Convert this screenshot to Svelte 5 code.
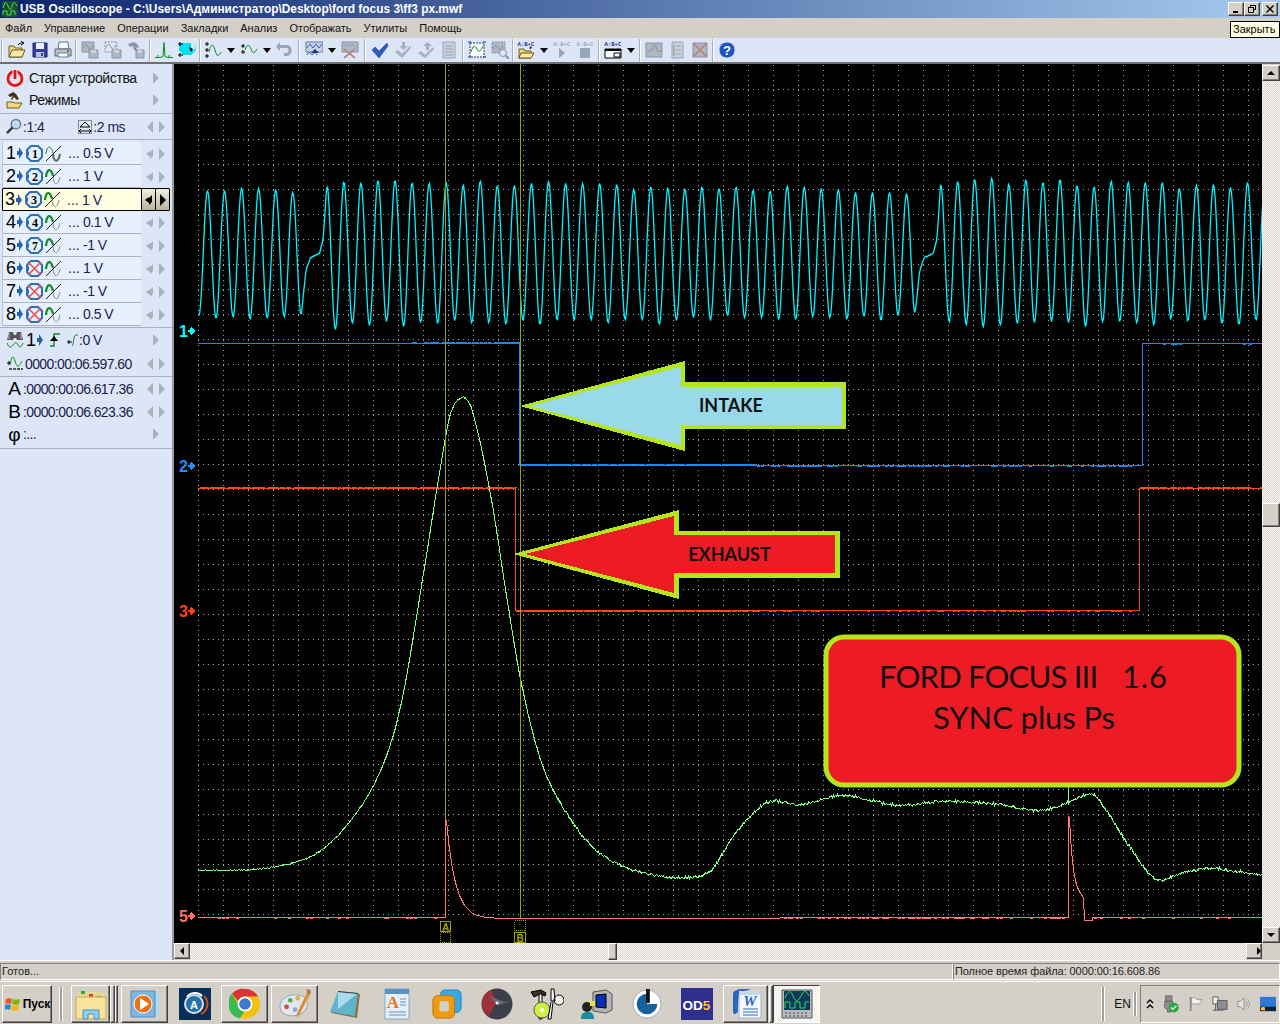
<script>
  // toolbar pictures, all on an 18x18 box
  const grey = 'fill="#aeb7c6" stroke="#8b95a6"';
  const ICONS = {
    open: '<path d="M1 5h5l1 2h7v9H1z" fill="#f6d67a" stroke="#6b5a20"/><path d="M1 16l3-7h13l-3 7z" fill="#fbe9a6" stroke="#6b5a20"/><path d="M10 4c1-2 3-2 5-2M13 0l3 2-3 2" fill="none" stroke="#000"/>',
    save: '<path d="M2 2h14v14H2z" fill="#2f3f9f" stroke="#1a2468"/><path d="M5 2h8v6H5z" fill="#e8ecf6"/><path d="M5 11h8v5H5z" fill="#b9c2d8"/><path d="M10 12h2v3h-2z" fill="#2f3f9f"/>',
    print: '<path d="M5 1h9l1 7H4z" fill="#f4f6fa" stroke="#6d7585"/><path d="M1 8h16v7H1z" fill="#bcc4d0" stroke="#5d6575"/><path d="M4 12h10v4H4z" fill="#fff" stroke="#6d7585"/><path d="M13 9h2v2h-2z" fill="#19a03c"/>',
    gcopy: '<path d="M1 1h12v10H1z" ' + grey + '/><path d="M2 7c2-5 3-5 5-1s3 2 5-2" fill="none" stroke="#7f9a7f"/><path d="M8 9h9v8H8z" ' + grey + '/><path d="M10 9h5v3h-5z" fill="#ccd3de"/>',
    gcopy2: '<path d="M1 1h12v10H1z" fill="none" stroke="#8b95a6" stroke-dasharray="2 1"/><path d="M2 7c2-5 3-5 5-1s3 2 5-2" fill="none" stroke="#7f9a7f"/><path d="M8 9h9v8H8z" ' + grey + '/><path d="M10 9h5v3h-5z" fill="#ccd3de"/>',
    ghammer: '<path d="M1 3l6-2 3 2 2 3-2 1-3-2-4 1z" fill="#8b95a6"/><path d="M7 5l3 3-1 2-3-3z" fill="#7a8494"/><path d="M9 9h8v8H9z" ' + grey + '/><path d="M11 9h4v3h-4z" fill="#ccd3de"/>',
    peak: '<path d="M0 16.500h5l3-1 1-14 1 14 3 1h5" fill="none" stroke="#0b8a1e"/><path d="M3 14v3M14 14v3" stroke="#0b8a1e"/>',
    cyan: '<path d="M1 2h12v6l4 1 1-7v7l-5 5H5L1 9z" fill="#00e0f0"/><path d="M0 3h5M0 14h5M2 1v4M2 12v4" stroke="#000"/><path d="M11 6l4 2-2 3z" fill="#000"/>',
    curs: '<path d="M1 3h4M3 1v4M1 9h4M3 7v4M1 15h4M3 13v4" stroke="#000"/><path d="M5 11c2-9 4-9 6-2s3 7 6 2" fill="none" stroke="#0b8a1e"/>',
    curs2: '<path d="M1 5h4M3 3v4M1 11h4M3 9v4" stroke="#000"/><path d="M5 9c2-6 4-6 6-1s3 5 6 0" fill="none" stroke="#0b8a1e"/>',
    undo: '<path d="M4 4h7c6 0 6 11 0 11H8v-3h3c2 0 2-5 0-5H4v3L0 5.500 4 1z" fill="#98a4b8"/>',
    split: '<path d="M1 1h17v10H1z" fill="#c7d2e6" stroke="#6a7a95"/><path d="M2 7l3-4 3 4 3-4 3 4 3-4" fill="none" stroke="#2a62d8"/><path d="M2 14l2-3 3 3 3-3 2 3" fill="none" stroke="#2a62d8"/><path d="M10 8l4 4h-8z" fill="#26337a"/>',
    gsplit: '<path d="M1 1h16v10H1z" ' + grey + '/><path d="M3 6l3-3 3 3 3-3 3 3" fill="none" stroke="#8ea0b8"/><path d="M3 8l11 9M14 8L3 17" stroke="#b98a84" stroke-width="2"/>',
    check: '<path d="M1 9l3-3 4 4 8-8 1 3-9 12z" fill="#2a5fc0" stroke="#1c3f8a" stroke-width=".5"/>',
    gcheck: '<path d="M1 11l3-2 4 4 8-8 1 2-9 10z" fill="#a6b0c0"/><path d="M8 1h3v4h3l-4.500 4L5 5h3z" fill="#a6b0c0"/>',
    gcheck2: '<path d="M1 12l3-2 4 4 8-8 1 2-9 9z" fill="#a6b0c0"/><path d="M9 9V5H6l4.500-4L15 5h-3v4z" fill="#a6b0c0"/>',
    gdoc: '<path d="M3 1h12v16H3z" fill="#c9d0dc" stroke="#9aa4b4"/><path d="M5 5h8M5 8h8M5 11h8M5 14h8" stroke="#9aa4b4"/>',
    gframe: '<path d="M2 2h14v14H2z" fill="#fff" stroke="#1a2f8a" stroke-dasharray="2 1"/><path d="M3 11c2-7 4-7 6-3s3 3 6-3" fill="none" stroke="#0b8a1e"/><path d="M0 1h3M0 16h3M15 1h3M15 16h3" stroke="#1a2f8a"/>',
    gzoom: '<path d="M1 1h13v11H1z" ' + grey + ' stroke-dasharray="2 1"/><path d="M2 8c2-4 3-4 5-1s3 1 5-2" fill="none" stroke="#7f9a7f"/><circle cx="12" cy="12" r="3.500" fill="#dde6f6" stroke="#8b95a6"/><path d="M14 14l4 4" stroke="#8b95a6" stroke-width="2"/>',
    abcfolder: '<path d="M2 8h5l1 2h6v7H2z" fill="#f6d67a" stroke="#6b5a20"/><path d="M2 17l2-5h13l-3 5z" fill="#fbe9a6" stroke="#6b5a20"/><path d="M12 7l3-2-1 3z" fill="#000"/><text x="0.500" y="5" class="mini" fill="#1a2f8a">A:B+C</text>',
    abcplay: '<text x="0.500" y="5" class="mini" fill="#9aa4b8">A:B+C</text><path d="M6 7l6 5-6 5z" fill="#98a4b8"/>',
    abcstop: '<text x="0.500" y="5" class="mini" fill="#9aa4b8">A:B+C</text><path d="M4 7h10v10H4z" fill="#98a4b8"/>',
    abcwin: '<text x="0.500" y="5" class="mini" fill="#1a2f8a">A:B+C</text><path d="M1 8h16v9H1z" fill="#fff" stroke="#000"/><path d="M1 8h16v2H1z" fill="#000"/><path d="M10 12h6v4h-6z" fill="#fff" stroke="#000"/>',
    gscope: '<path d="M1 2h16v14H1z" ' + grey + '/><path d="M2 10h4c2 0 2-6 4-6s1 8 3 6h4" fill="none" stroke="#7f9a7f"/>',
    gdoc2: '<path d="M4 1h11v16H4z" fill="#c9d0dc" stroke="#9aa4b4"/><path d="M6 4v11" stroke="#7f9a7f"/><path d="M8 5h5M8 9h5M8 13h5" stroke="#9aa4b4"/>',
    gx: '<path d="M2 2h14v14H2z" ' + grey + '/><path d="M2 2l14 14M16 2L2 16" stroke="#b98a84" stroke-width="2"/>',
    help: '<circle cx="9" cy="9" r="8" fill="#2353c0" stroke="#bcd0f0"/><text x="9" y="13.500" class="q">?</text>'
  };

  const TOOLS = [
    's1','open','save','print','s4','gcopy','gcopy2','ghammer','s5','peak','cyan','s3',
    'curs','dd','curs2','dd','undo','s6','split','dd','gsplit','s7',
    'check','gcheck','gcheck2','gdoc','s5','gframe','gzoom','s3',
    'abcfolder','dd','abcplay','abcstop','s5','abcwin','dd','s5','gscope','gdoc2','gx','s4','help'
  ];
  const MENU = ['Файл','Управление','Операции','Закладки','Анализ','Отображать','Утилиты','Помощь'];
  const CHANNELS = [
    { n: 1, src: '1', v: '0.5 V', dim: true },
    { n: 2, src: '2', v: '1 V' },
    { n: 3, src: '3', v: '1 V', sel: true },
    { n: 4, src: '4', v: '0.1 V' },
    { n: 5, src: '7', v: '-1 V' },
    { n: 6, src: '', v: '1 V' },
    { n: 7, src: '', v: '-1 V' },
    { n: 8, src: '', v: '0.5 V' }
  ];

  // scope traces, in page pixels
  const L = 198, R = 1262;
  const rnd = i => Math.abs(Math.sin(i * 12.9898 + 4.1) * 43758.5453) % 1;
  const pts = list => list.map(p => p[0] + ',' + p[1]).join(' ');

  let gridV = '';
  for (let x = L; x < R; x += 25) gridV += `M${x + 0.5} 65V915`;
  let gridH = '';
  for (let y = 89; y <= 914; y += 25) gridH += `M${L} ${y + 0.5}H${R}`;

  const P = 17.05, X0 = 207;
  const top = i => {
    const d = ((i - 7) % 36 + 36) % 36;
    return 180 + 11 * d / 36 + 7 * (rnd(i) - 0.5);
  };
  const bot = i => {
    const d = ((i - 7) % 36 + 36) % 36;
    return 325 - 9 * d / 36 + 8 * (rnd(i + 99) - 0.5);
  };
  const GAP_T = [0, 0.18, 0.36, 0.71, 0.86, 1];
  function cyanY(x) {
    const k = (x - X0) / P;
    for (const g of [6, 42]) {
      if (k >= g - 0.5 && k < g + 1) {
        const t = (k - g + 0.5) / 1.5;
        const ys = [bot(g - 1), 270, 257, 253, 238, top(g + 1)];
        let j = 0;
        while (t > GAP_T[j + 1]) j++;
        return ys[j] + (ys[j + 1] - ys[j]) * (t - GAP_T[j]) / (GAP_T[j + 1] - GAP_T[j]);
      }
    }
    const s = Math.floor(2 * k);
    const f = 2 * k - s;
    const val = n => (n % 2 === 0 ? top(n / 2) : bot((n - 1) / 2));
    const e = (1 - Math.cos(Math.PI * f)) / 2;
    return val(s) + (val(s + 1) - val(s)) * e;
  }
  const cyan = [];
  for (let x = L; x <= R; x++) cyan.push([x + 0.5, Math.round(cyanY(x)) + 0.5]);

  const GREEN = [[198,870],[250,869],[290,863],[320,850],[350,820],[380,770],[400,705],[420,590],[440,465],[450,413],[462,397],[472,412],[490,495],[505,590],[520,680],[540,760],[560,803],[590,845],[620,865],[650,874],[690,877],[710,870],[730,840],[750,815],[770,801],[800,804],[840,795],[870,800],[900,805],[940,801],[990,803],[1040,810],[1068,802],[1092,794],[1110,817],[1128,845],[1150,875],[1160,880],[1173,875],[1207,868],[1235,871],[1262,875]];
  function greenY(x) {
    let i = 0;
    while (i < GREEN.length - 2 && x > GREEN[i + 1][0]) i++;
    const p1 = GREEN[i], p2 = GREEN[i + 1];
    const p0 = GREEN[i - 1] || p1, p3 = GREEN[i + 2] || p2;
    const t = (x - p1[0]) / (p2[0] - p1[0]);
    const m1 = (p2[1] - p0[1]) / (p2[0] - p0[0]) * (p2[0] - p1[0]);
    const m2 = (p3[1] - p1[1]) / (p3[0] - p1[0]) * (p2[0] - p1[0]);
    const t2 = t * t, t3 = t2 * t;
    return (2*t3 - 3*t2 + 1) * p1[1] + (t3 - 2*t2 + t) * m1 + (-2*t3 + 3*t2) * p2[1] + (t3 - t2) * m2;
  }
  const green = [];
  for (let x = L; x <= R; x += 0.5) {
    const amp = x > 540 ? 2.6 : 1.2;
    green.push([Math.round(x) + 0.5, Math.round(greenY(x) + (rnd(Math.round(x)) - 0.5) * amp) + 0.5]);
  }

  const pink = [[L, 917.5], [445.5, 917.5], [445.5, 820.5]];
  for (let x = 446; x <= 500; x++) pink.push([x + 0.5, Math.round(918 - 98 * Math.exp(-(x - 446) / 9)) + 0.5]);
  pink.push([1068.5, 917.5], [1068.5, 816.5]);
  for (let x = 1069; x <= 1083; x++) pink.push([x + 0.5, Math.round(888 + 10 * ((x - 1069) / 14) - 70 * Math.exp(-(x - 1069) / 3.5)) + 0.5]);
  pink.push([1084.5, 920.5], [1092.5, 920.5], [1092.5, 917.5], [R, 917.5]);

  const blue = [[L, 343.5], [519.5, 343.5], [519.5, 465.5], [1142.5, 465.5], [1142.5, 343.5], [R, 343.5]];
  const orange = [[L, 488.5], [515.5, 488.5], [515.5, 610.5], [1139.5, 610.5], [1139.5, 488.5], [R, 488.5]];

  // the samples jitter by a pixel, which makes the flat parts look thicker
  function speckle(x1, x2, y, density) {
    let d = '';
    for (let x = x1; x < x2; x += 2) {
      if (rnd(x * 1.7 + y) < density) d += `M${x} ${y + 0.5}h3`;
    }
    return d;
  }
  const blueSpeck = speckle(412, 519, 342, 0.7) + speckle(520, 755, 464, 0.9) + speckle(755, 1142, 466, 0.35) + speckle(1143, 1262, 344, 0.15);
  const orangeSpeck = speckle(198, 515, 487, 0.8) + speckle(516, 755, 611, 0.85) + speckle(755, 1139, 611, 0.3) + speckle(1140, 1262, 487, 0.7);
  const pinkSpeck = speckle(198, 445, 918, 0.2) + speckle(500, 1068, 918, 0.35) + speckle(1092, 1262, 918, 0.15);

  const LABELS = [
    { t: '1', y: 337, c: '#00ffff' },
    { t: '2', y: 472, c: '#1e90ff' },
    { t: '3', y: 617, c: '#ff4500' },
    { t: '5', y: 922, c: '#ff7070' }
  ];
</script>

<div class="app">
  <header class="title">
    <svg class="appicon" viewBox="0 0 16 16"><rect width="16" height="16" fill="#1d4a30"/><path d="M1 7c2-7 3-7 5-2s3 5 4 0 3-4 5 0" fill="none" stroke="#30f050"/><path d="M1 14V10h4v4h4V10h4v4" fill="none" stroke="#30f050"/></svg>
    <span class="title-text">USB Oscilloscope - C:\Users\Администратор\Desktop\ford focus 3\ff3 px.mwf</span>
    <div class="winbtns">
      <button class="bev wb"><svg viewBox="0 0 10 10"><path d="M2 7h5v2H2z"/></svg></button>
      <button class="bev wb"><svg viewBox="0 0 10 10"><path d="M3.500 3V1.500h5v4H7M1.500 3.500h5v5h-5z" fill="none" stroke="#000"/><path d="M1 3h6v1H1zM3 1h6v1H3z"/></svg></button>
      <button class="bev wb wide"><svg viewBox="0 0 10 10"><path d="M1.500 1.500l7 7M8.500 1.500l-7 7" stroke="#000" stroke-width="1.400"/></svg></button>
    </div>
  </header>

  <nav class="menu">
    {#each MENU as m}<span>{m}</span>{/each}
  </nav>

  <div class="toolbar">
    {#each TOOLS as t}
      {#if t === 'dd'}
        <span class="dd"><i></i></span>
      {:else if t[0] === 's' && t.length === 2}
        <span class="sep {t}"></span>
      {:else}
        <span class="tool"><svg viewBox="0 0 18 18" width="18" height="18">{@html ICONS[t]}</svg></span>
      {/if}
    {/each}
  </div>

  <div class="work">
    <aside class="side">
      <div class="srow big first">
        <svg class="ic" viewBox="0 0 18 18"><circle cx="9" cy="9.500" r="7" fill="none" stroke="#e81010" stroke-width="2.800"/><path d="M9 0v9" stroke="#dde6f6" stroke-width="5"/><path d="M9 1v9" stroke="#e81010" stroke-width="2.800"/></svg>
        <span class="label">Старт устройства</span>
        <i class="tri r"></i>
      </div>
      <div class="srow big second rule">
        <svg class="ic" viewBox="0 0 18 18"><path d="M1 11h6l1 1h8l-3 5H1z" fill="#f6d67a" stroke="#6b5a20"/><path d="M2 4l5-3 3 2 3 5-2 1-3-3-2 3-1-1 2-3-3 1z" fill="#3f3018"/></svg>
        <span class="label">Режимы</span>
        <i class="tri r"></i>
      </div>
      <div class="srow zoomrow rule">
        <svg class="ic small" viewBox="0 0 18 18"><circle cx="10.500" cy="6.500" r="5" fill="#bcd8f4" stroke="#6e7a8a" stroke-width="1.500"/><path d="M7 10l-6 6" stroke="#3a3a3a" stroke-width="2.500"/></svg>
        <span class="val">:1:4</span>
        <svg class="ic tb" viewBox="0 0 14 14"><rect x=".5" y=".5" width="13" height="13" fill="none" stroke="#333" stroke-dasharray="1 1"/><path d="M7 2l5 5H2z" fill="none" stroke="#000"/><path d="M1 11h12M1 11l2-2M1 11l2 2M13 11l-2-2M13 11l-2 2" fill="none" stroke="#000"/></svg>
        <span class="val">:2 ms</span>
        <span class="arrows"><i class="tri l"></i><i class="tri r"></i></span>
      </div>

      <div class="channels">
        {#each CHANNELS as c}
          <div class="ch" class:sel={c.sel}>
            <div class="ch-main">
              <span class="num">{c.n}</span>
              <svg class="bluearrow" viewBox="0 0 6 12"><path d="M0 4h2V0l4 6-4 6V8H0z" fill="#2a62b0"/></svg>
              <svg class="octa" viewBox="0 0 17 17">
                <path d="M5 1h7l4 4v7l-4 4H5l-4-4V5z" fill="#e6f0ff" stroke="#2f6fb4" stroke-width="2"/>
                <path d="M0 8.500l3-2.500v5z" fill="#2f6fb4"/>
                {#if c.src}
                  <text x="9" y="13" class="octanum">{c.src}</text>
                {:else}
                  <path d="M2 2l13 13M15 2L2 15" stroke="#f05050" stroke-width="1.600"/>
                {/if}
              </svg>
              <svg class="wave" viewBox="0 0 17 17">
                <path d="M1 9C2 0 6 0 8 8" fill="none" stroke="#0b8a1e" stroke-width={c.dim ? 1 : 2.2}/>
                <path d="M8 9c1 9 5 9 7 0" fill="none" stroke={c.dim ? '#666' : '#888'} stroke-width={c.dim ? 2.2 : 1}/>
                <path d="M1 16L16 1" stroke="#222"/>
              </svg>
              <span class="dots">...</span>
              <span class="val">{c.v}</span>
            </div>
            <div class="ch-arrows">
              {#if c.sel}
                <span class="selbtn"><svg viewBox="0 0 8 12"><path d="M1 6h3v5l3-3V1L4 4V6z" fill="#000"/><path d="M0 6l4-3v6z" fill="#000"/></svg></span>
                <span class="selbtn"><i class="tri r black"></i></span>
              {:else}
                <svg class="back" viewBox="0 0 8 12"><path d="M1 6h3v5l3-3V1L4 4V6z" fill="#a9b1bd"/><path d="M0 6l4-3v6z" fill="#a9b1bd"/></svg>
                <i class="tri r"></i>
              {/if}
            </div>
          </div>
        {/each}
      </div>

      <div class="srow trig rule-top">
        <svg class="ic" viewBox="0 0 18 18"><path d="M3 1h4l1 3h2l1-3h4l2 8H11L10 7H8L7 9H1z" fill="#555"/><path d="M3 2v6M15 2v6" stroke="#bbb"/><path d="M1 12c2 5 4 5 6 2s4-3 5 0 3 3 5-2" fill="none" stroke="#0b8a1e"/></svg>
        <span class="num">1</span>
        <svg class="bluearrow" viewBox="0 0 6 12"><path d="M0 4h2V0l4 6-4 6V8H0z" fill="#2a62b0"/></svg>
        <svg class="ic edge" viewBox="0 0 12 14"><path d="M1 13h4V1h6" fill="none" stroke="#0b8a1e" stroke-width="1.400"/><path d="M5 3l4 5H1z" fill="#000"/></svg>
        <svg class="ic lvl" viewBox="0 0 12 14"><path d="M0 9h5M2 7v4" stroke="#000"/><path d="M5 13c2 0 1-11 4-11h2" fill="none" stroke="#0b8a1e"/></svg>
        <span class="val">:0 V</span>
        <i class="tri r push"></i>
      </div>
      <div class="srow trig2">
        <svg class="ic" viewBox="0 0 18 18"><path d="M1 8h4M3 6v4" stroke="#000"/><path d="M3 14h14" stroke="#555" stroke-width="2" stroke-dasharray="3 1"/><path d="M4 10c2-10 3-10 5-4s3 8 7 0" fill="none" stroke="#0b8a1e"/></svg>
        <span class="val time">0000:00:06.597.60</span>
        <span class="arrows"><i class="tri l"></i><i class="tri r"></i></span>
      </div>
      <div class="srow cur first-cur rule-top">
        <span class="curname">A</span>
        <span class="val time">:0000:00:06.617.36</span>
        <span class="arrows"><i class="tri l"></i><i class="tri r"></i></span>
      </div>
      <div class="srow cur">
        <span class="curname">B</span>
        <span class="val time">:0000:00:06.623.36</span>
        <span class="arrows"><i class="tri l"></i><i class="tri r"></i></span>
      </div>
      <div class="srow cur phi rule">
        <span class="curname">φ</span>
        <span class="val time">:...</span>
        <i class="tri r push"></i>
      </div>
    </aside>

    <div class="center">
      <div class="scope-row">
        <svg class="scope" viewBox="174 64 1088 879" width="1088" height="879">
          <rect x="174" y="64" width="1088" height="879" fill="#000"/>
          <g shape-rendering="crispEdges" fill="none" stroke="#a0a0a0" stroke-dasharray="1 4">
            <path d={gridV}/>
            <path d={gridH}/>
          </g>

          <polyline points={pts(cyan)} fill="none" stroke="#00f4ff" stroke-width="1.300"/>
          <g fill="none" shape-rendering="crispEdges">
            <polyline points={pts(blue)} stroke="#1e88f0"/>
            <path d={blueSpeck} stroke="#1e88f0"/>
            <polyline points={pts(orange)} stroke="#ff4a10"/>
            <path d={orangeSpeck} stroke="#ff4a10"/>
            <polyline points={pts(green)} stroke="#80ff80"/>
            <path d="M1068.500 787V802" stroke="#80ff80"/>
            <path d="M445.500 64V918M520.500 64V918" stroke="#a0a000"/>
            <polyline points={pts(pink)} stroke="#ff7878"/>
            <path d={pinkSpeck} stroke="#ff7878"/>
          </g>

          {#each LABELS as l}
            <text x="179" y={l.y} class="chlabel" fill={l.c}>{l.t}</text>
            <path d="M188 {l.y - 7}h2v-2h1v-2l4 5-4 5v-2h-1v-2h-2z" fill={l.c} shape-rendering="crispEdges"/>
          {/each}

          <g fill="none" stroke="#a0a000" shape-rendering="crispEdges">
            <rect x="440.500" y="921.500" width="10" height="10"/>
            <rect x="440.500" y="932.500" width="10" height="10" stroke-dasharray="1 1"/>
            <rect x="514.500" y="920.500" width="11" height="10" stroke-dasharray="1 1"/>
            <rect x="514.500" y="932.500" width="11" height="10"/>
          </g>
          <text x="445.500" y="930.500" class="mark">A</text>
          <text x="520" y="941.500" class="mark">B</text>

          <g shape-rendering="crispEdges">
            <polygon points="520,406 685,361 685,382 846,382 846,429 685,429 685,451" fill="#b5e61d"/>
            <polygon points="530,406 681,367 681,387 842,387 842,425 681,425 681,445" fill="#99d9ea"/>
            <polygon points="513,554 679,510 679,531 840,531 840,578 679,578 679,599" fill="#b5e61d"/>
            <polygon points="525,554 674,516 674,535 835,535 835,573 674,573 674,593" fill="#ed1c24"/>
          </g>
          <text x="731" y="412" class="arrowtext">INTAKE</text>
          <text x="729.500" y="561" class="arrowtext">EXHAUST</text>

          <rect x="826" y="637" width="413" height="148" rx="18" fill="#ed1c24" stroke="#b5e61d" stroke-width="5"/>
          <text x="879" y="688" class="boxtext first-line">FORD FOCUS III<tspan x="1122" class="ver">1.6</tspan></text>
          <text x="1024" y="729" class="boxtext mid">SYNC plus Ps</text>
        </svg>

        <div class="vbar">
          <button class="bev sb"><i class="ar up"></i></button>
          <div class="track"><div class="bev vthumb"></div></div>
          <button class="bev sb"><i class="ar down"></i></button>
        </div>
      </div>
      <div class="hbar">
        <button class="bev sb"><i class="ar left"></i></button>
        <div class="track"><div class="bev hthumb"></div></div>
        <button class="bev sb"><i class="ar right"></i></button>
        <div class="corner"></div>
      </div>
    </div>
  </div>

  <div class="status">
    <div class="panel grow">Готов...</div>
    <div class="panel fixed">Полное время файла: 0000:00:16.608.86</div>
  </div>

  <footer class="taskbar">
    <button class="bev task start">
      <svg viewBox="0 0 16 16" width="16" height="16"><path d="M1 3c2-1 4-1 6 0l-1 5c-2-1-4-1-6 0z" fill="#e8562a"/><path d="M8 3c2 1 4 1 7 0l-1 5c-2 1-5 1-7 0z" fill="#7ab800"/><path d="M0 9c2-1 4-1 6 0l-1 5c-2-1-4-1-6 0z" fill="#1e88d8"/><path d="M7 9c2 1 4 1 7 0l-1 5c-2 1-5 1-7 0z" fill="#f4b400"/></svg>
      <b>Пуск</b>
    </button>
    <span class="handle h1"></span>

    <button class="bev task t39">
      <svg viewBox="0 0 32 32" width="32" height="32"><path d="M3 4h26v5H3z" fill="#e8d890"/><path d="M6 3h4v3H6z" fill="#38a838"/><path d="M14 6h4v3h-4z" fill="#d83838"/><path d="M22 8h4v3h-4z" fill="#3888d8"/><path d="M1 9h30v22H1z" fill="#f8e49a" stroke="#c8a850"/><path d="M8 31V22h16v9h-5v-5h-6v5z" fill="#8ad0f0" stroke="#4a90c8"/></svg>
    </button>
    <span class="bev stack"></span><span class="bev stack s2"></span>
    <button class="bev task t47 ml3">
      <svg viewBox="0 0 32 32" width="32" height="32"><path d="M6 3h24v24H6z" fill="#b6d6ee"/><path d="M2 3h24v26H2z" fill="#7fb6e0" stroke="#4a90c8"/><circle cx="14" cy="16" r="9" fill="#f07010" stroke="#fff" stroke-width="1"/><path d="M11 10l9 6-9 6z" fill="#fff"/></svg>
    </button>
    <span class="slot s53">
      <svg viewBox="0 0 32 32" width="32" height="32"><rect width="32" height="32" fill="#062e56"/><path d="M8 9a10 10 0 0 1 15-1" fill="none" stroke="#fff" stroke-width="2"/><circle cx="15" cy="16" r="9" fill="#2a6ea8" stroke="#cfe4f6" stroke-width="2"/><path d="M25 8a11 11 0 0 1-3 18" fill="none" stroke="#d85010" stroke-width="2"/><text x="15" y="21" class="avast">A</text></svg>
    </span>
    <button class="bev task t47">
      <svg viewBox="0 0 32 32" width="32" height="32"><circle cx="16" cy="16" r="15" fill="#f4c20d"/><path d="M16 1a15 15 0 0 1 13 7.500H16a7.500 7.500 0 0 0-7 4.500L3 5.600A15 15 0 0 1 16 1z" fill="#db3236"/><path d="M3 5.600l6.500 11.400a7.500 7.500 0 0 0 6 6.500l-4.700 7A15 15 0 0 1 3 5.600z" fill="#3cba54"/><circle cx="16" cy="16" r="7.500" fill="#fff"/><circle cx="16" cy="16" r="5.800" fill="#3f78c8"/></svg>
    </button>
    <button class="bev task t47 ml3">
      <svg viewBox="0 0 36 34" width="34" height="32"><path d="M2 20C2 10 14 5 24 8s9 14 1 19-23 3-23-7z" fill="#dfe8ee" stroke="#8aa0b0"/><circle cx="9" cy="20" r="2.500" fill="#e04040"/><circle cx="13" cy="13" r="2.500" fill="#50b050"/><circle cx="21" cy="11" r="2.500" fill="#f0b030"/><circle cx="18" cy="23" r="2.500" fill="#90a8c8"/><path d="M32 2l3 3-12 23-3 4 0-5z" fill="#e09030"/><path d="M30 1l5 1-1 5-3-1z" fill="#a88050"/></svg>
    </button>
    <span class="slot s50 ml4">
      <svg viewBox="0 0 34 32" width="34" height="32"><path d="M9 3l21 3-3 24L1 25z" fill="#8a7040"/><path d="M8 3l20 2-3 23L0 24z" fill="#5eb4cc"/><path d="M8 3l20 2-20 16z" fill="#a8dce8"/><path d="M8 3l20 2 0 1-20-2z" fill="#333"/></svg>
    </span>
    <span class="slot s50">
      <svg viewBox="0 0 28 32" width="28" height="32"><path d="M2 1h24v30H2z" fill="#e6eef8" stroke="#8aa8c8"/><path d="M2 1h24v5H2z" fill="#5a90c8"/><text x="10" y="20" class="wp">A</text><path d="M17 11h6M17 14h6M17 17h6M6 24h17M6 27h17" stroke="#6a90c0"/></svg>
    </span>
    <span class="slot s50">
      <svg viewBox="0 0 32 32" width="30" height="30"><rect x="9" y="1" width="22" height="24" rx="5" fill="#3aa8e8" stroke="#2080c0"/><rect x="1" y="7" width="23" height="24" rx="5" fill="#f09a10" stroke="#c07008"/><rect x="8" y="13" width="10" height="11" rx="2" fill="#d4d0c8"/></svg>
    </span>
    <span class="slot s50">
      <svg viewBox="0 0 32 32" width="32" height="32"><circle cx="16" cy="16" r="15.500" fill="#3a3f4a"/><path d="M1 16A15 15 0 0 1 10 2l6 12-4 6-4 8A15 15 0 0 1 1 16z" fill="#a03038"/><path d="M8 8l15 6 8-1-14 4z" fill="#6a6f7a"/><circle cx="16" cy="15" r="1.500" fill="#fff"/></svg>
    </span>
    <span class="slot s50">
      <svg viewBox="0 0 34 32" width="34" height="32"><path d="M1 4l10-2 5 3-1 3-5-2-6 3z" fill="#333" stroke="#000"/><path d="M9 6h3v25H9z" fill="#f0f0f0" stroke="#000"/><circle cx="12" cy="22" r="8" fill="#d0f040" stroke="#555"/><circle cx="12" cy="22" r="2" fill="#fff"/><path d="M21 1h3l1 12h-4zM26 16a5 5 0 1 1 6-8 5 5 0 0 1-6 8zM23 14l-2 17h-3l3-17" fill="#f4f4f4" stroke="#000"/></svg>
    </span>
    <span class="slot s50">
      <svg viewBox="0 0 32 30" width="32" height="30"><path d="M12 3l13-2 6 4v16l-6 3-13-2z" fill="#b4b4b4" stroke="#555"/><path d="M15 6l10-1v14l-10-1z" fill="#0a2fb0" stroke="#000"/><circle cx="6" cy="18" r="5" fill="#222"/><path d="M0 30c0-6 3-7 7-7s6 2 6 7z" fill="#1a8aa0"/><path d="M9 12h5v5H9z" fill="#f0e040"/></svg>
    </span>
    <span class="slot s50">
      <svg viewBox="0 0 32 32" width="30" height="30"><circle cx="16" cy="16" r="15" fill="#fff" stroke="#9ab"/><path d="M16 16V5a11 11 0 1 0 11 11z" fill="#1a6098"/><path d="M15 0h4v15h-4z" fill="#111"/></svg>
    </span>
    <span class="slot s50">
      <svg viewBox="0 0 32 32" width="32" height="32"><rect width="32" height="32" fill="#2e2e8e"/><text x="1.500" y="22" class="od">OD<tspan fill="#ffc820">5</tspan></text></svg>
    </span>
    <button class="bev task t45 ml1">
      <svg viewBox="0 0 32 32" width="32" height="32"><path d="M3 6c0-3 4-5 11-5h6l-1 1C9 3 8 8 8 22c0 5-5 5-5 2z" fill="#2a68c0"/><path d="M9 6h22v24H9z" fill="#f4f8fc" stroke="#9ab4d4"/><path d="M9 3h17l5 3H9z" fill="#c8d8ec"/><text x="20" y="18" class="wordw">W</text><path d="M13 21h15M13 24h15M13 27h15" stroke="#2a68c0"/></svg>
    </button>
    <span class="bev stack s3"></span>
    <button class="task t47 active">
      <svg viewBox="0 0 34 32" width="34" height="32"><path d="M2 2h30v28H2z" fill="#b8bcc0" stroke="#555"/><path d="M4 3h26v19H4z" fill="#103858"/><path d="M5 10c3-8 6-8 8-2s5 6 8 0 5-6 8 0" fill="none" stroke="#20e060"/><path d="M5 20v-6h5v6h5v-6h5v6h5v-6h4" fill="none" stroke="#20e060"/><path d="M5 25h24M5 28h24" stroke="#444" stroke-dasharray="2 2"/></svg>
    </button>

    <div class="right">
      <span class="handle"></span>
      <span class="lang">EN</span>
      <span class="handle thin"></span>
      <div class="tray">
        <svg class="chev" viewBox="0 0 8 10" width="8" height="10"><path d="M1 4l3-3 3 3M1 9l3-3 3 3" fill="none" stroke="#000" stroke-width="1.400"/></svg>
        <svg viewBox="0 0 20 20" width="18" height="18"><path d="M4 1h7v6H4zM3 7h9v7l-2 2v3H6v-3l-3-2z" fill="#8a8f94" stroke="#666"/><circle cx="13" cy="14" r="5.500" fill="#2aa83c"/><path d="M10 14l2 2 4-4" fill="none" stroke="#fff" stroke-width="1.500"/></svg>
        <svg class="ti" viewBox="0 0 18 18" width="16" height="16"><path d="M3 1v16" stroke="#888" stroke-width="2"/><path d="M4 2h5l1 2h6l-3 4 1 1H4z" fill="#eef0f0" stroke="#999"/></svg>
        <svg class="ti" viewBox="0 0 18 18" width="16" height="16"><path d="M1 1h6v8H1z" fill="#eee" stroke="#555"/><path d="M4 9v7M1 16h12" stroke="#555"/><path d="M6 5h11v10H6z" fill="#8a8f94" stroke="#555"/></svg>
        <svg class="ti" viewBox="0 0 18 18" width="16" height="16"><path d="M2 6h3l4-4v14l-4-4H2z" fill="#e6e6e6" stroke="#888"/><path d="M11 6c2 2 2 4 0 6M13 4c3 3 3 7 0 10" fill="none" stroke="#999"/></svg>
        <svg class="ti" viewBox="0 0 18 18" width="16" height="16"><rect y="1" width="18" height="16" fill="#2a78d8"/><path d="M0 12h18v5H0z" fill="#123"/><path d="M1 13l4-1 1 4H1z" fill="#ffc820"/></svg>
      </div>
    </div>
  </footer>

  <div class="tooltip">Закрыть</div>
</div>

<style>
  :global(body) { margin: 0; background: #d4d0c8; }
  .app { position: relative; width: 1280px; height: 1024px; overflow: hidden; display: flex; flex-direction: column; font-family: "Liberation Sans", Arial, sans-serif; color: #000; }
  svg { display: block; flex-shrink: 0; }
  i { display: block; }
  button { padding: 0; margin: 0; font: inherit; }
  .bev { background: #d4d0c8; border: 1px solid; border-color: #fff #404040 #404040 #fff; box-shadow: inset -1px -1px #808080; box-sizing: border-box; }

  .title { height: 18px; display: flex; align-items: center; background: linear-gradient(90deg, #0a246a, #a6caf0); padding-left: 2px; box-sizing: border-box; }
  .appicon { width: 16px; height: 16px; margin-right: 2px; }
  .title-text { color: #fff; font: bold 11.900px "Liberation Sans", sans-serif; white-space: nowrap; }
  .winbtns { margin-left: auto; display: flex; gap: 0; margin-right: 2px; }
  .wb { width: 16px; height: 14px; display: flex; align-items: center; justify-content: center; }
  .wb svg { width: 10px; height: 10px; }
  .wb.wide { margin-left: 2px; }

  .menu { height: 20px; background: #d4d0c8; display: flex; align-items: center; gap: 12px; padding-left: 5px; font-size: 11px; color: #111; box-sizing: border-box; white-space: nowrap; }

  .toolbar { height: 26px; box-sizing: border-box; border-bottom: 2px solid #6f6f6f; background: #dde6f6; display: flex; align-items: center; }
  .tool { width: 23px; height: 18px; display: flex; justify-content: center; }
  .toolbar :global(.mini) { font: bold 5.600px "Liberation Mono", monospace; }
  .toolbar :global(.q) { font: bold 13px "Liberation Sans", sans-serif; fill: #fff; text-anchor: middle; }
  .dd { width: 13px; display: flex; justify-content: center; }
  .dd i { border-left: 4.500px solid transparent; border-right: 4.500px solid transparent; border-top: 5px solid #000; }
  .sep { height: 23px; display: flex; justify-content: center; }
  .sep::after { content: ""; width: 1px; height: 100%; background: #a8aeb8; border-right: 1px solid #fff; }
  .s1 { width: 5px; justify-content: flex-start; padding-left: 1px; box-sizing: border-box; }
  .s3 { width: 3px; }
  .s4 { width: 4px; }
  .s5 { width: 5px; }
  .s6 { width: 6px; }
  .s7 { width: 7px; }

  .work { height: 896px; display: flex; }
  .side { width: 174px; flex-shrink: 0; box-sizing: border-box; background: #dde6f6; border-right: 2px solid #9a9aa0; height: 896px; overflow: hidden; }
  .srow { display: flex; align-items: center; box-sizing: border-box; padding-left: 6px; padding-right: 7px; font-size: 14px; }
  .ic { width: 18px; height: 18px; }
  .big { height: 23px; }
  .first { margin-top: 2px; }
  .second { height: 25px; padding-bottom: 2px; }
  .label { margin-left: 5px; flex: 1; color: #111; letter-spacing: -0.400px; white-space: nowrap; }
  .rule { border-bottom: 1px solid #aab0ba; }
  .rule-top { border-top: 1px solid #aab0ba; }

  .val { color: #1a1c50; letter-spacing: -0.500px; white-space: nowrap; }
  .tri { width: 0; height: 0; border-top: 6px solid transparent; border-bottom: 6px solid transparent; flex-shrink: 0; }
  .tri.r { border-left: 6px solid #a9b1bd; }
  .tri.l { border-right: 6px solid #a9b1bd; }
  .tri.r.black { border-left-color: #000; }
  .arrows { margin-left: auto; display: flex; gap: 6px; }
  .push { margin-left: auto; margin-right: 6px; }
  .big .tri { margin-right: 6px; }

  .zoomrow { height: 26px; }
  .ic.small { width: 17px; height: 17px; }
  .ic.tb { width: 14px; height: 14px; margin-left: 34px; margin-right: 1px; }

  .channels { padding: 2px 0 0 2px; height: 186px; box-sizing: border-box; }
  .ch { display: flex; height: 23px; box-sizing: border-box; width: 168px; }
  .ch-main { width: 139px; background: #e6f0ff; border-bottom: 1px solid #aab3bf; border-left: 1px solid #c0c6d0; box-sizing: border-box; display: flex; align-items: center; font-size: 14px; padding-left: 3px; }
  .num { font-size: 18px; width: 10px; color: #000; }
  .bluearrow { width: 6px; height: 12px; margin-left: 1px; }
  .octa { width: 17px; height: 17px; margin-left: 3px; }
  .octa :global(.octanum) { font: bold 12px "Liberation Serif", serif; text-anchor: middle; fill: #000; }
  .wave { width: 17px; height: 17px; margin-left: 2px; }
  .dots { margin-left: 6px; width: 15px; color: #1a1c50; }
  .ch-arrows { width: 29px; display: flex; align-items: center; padding-left: 5px; gap: 5px; box-sizing: border-box; }
  .back { width: 8px; height: 12px; }
  .ch.sel { background: #ffffe1; border: 1px solid #000; border-radius: 1px; height: 23px; }
  .ch.sel .ch-main { background: none; border: 0; padding-left: 2px; width: 138px; }
  .ch.sel .ch-arrows { padding: 0; gap: 0; width: 28px; }
  .selbtn { width: 14px; height: 100%; display: flex; align-items: center; justify-content: center; background: linear-gradient(#f0eee0, #b8b49c); border-left: 1px solid #000; box-sizing: border-box; }
  .selbtn svg { width: 8px; height: 12px; }

  .trig { height: 25px; margin-top: 1px; }
  .trig .num { margin-left: 2px; }
  .ic.edge { width: 12px; height: 14px; margin-left: 6px; }
  .ic.lvl { width: 12px; height: 14px; margin-left: 6px; }
  .trig2 { height: 24px; }
  .trig2 .ic { margin-right: 1px; }
  .time { font-size: 14px; letter-spacing: -0.600px; }
  .cur { height: 23px; }
  .first-cur { height: 24px; }
  .curname { width: 15px; margin-left: 1px; margin-right: 1px; font-size: 19px; color: #000; line-height: 1; text-align: center; }
  .phi { height: 26px; padding-bottom: 3px; }

  .center { flex: 1; display: flex; flex-direction: column; min-width: 0; }
  .scope-row { display: flex; height: 879px; }
  .chlabel { font: bold 16px "Liberation Sans", sans-serif; }
  .mark { font: bold 10px "Liberation Sans", sans-serif; fill: #a0a000; text-anchor: middle; }
  .arrowtext { font: bold 18px Lato, sans-serif; fill: #111; text-anchor: middle; }
  .boxtext { font: 31px Lato, sans-serif; fill: #111; }
  .boxtext.mid { text-anchor: middle; letter-spacing: -0.100px; }
  .first-line { letter-spacing: -0.800px; }
  .ver { letter-spacing: 0.800px; }

  .track { flex: 1; position: relative; background: repeating-conic-gradient(#ffffff 0 25%, #d4d0c8 0 50%) 0 0 / 2px 2px; }
  .vbar { width: 18px; display: flex; flex-direction: column; padding-top: 1px; box-sizing: border-box; }
  .hbar { height: 17px; display: flex; }
  .sb { width: 16px; height: 16px; display: flex; align-items: center; justify-content: center; flex-shrink: 0; }
  .vbar .sb { width: 18px; }
  .ar { width: 0; height: 0; }
  .ar.up { border-left: 4px solid transparent; border-right: 4px solid transparent; border-bottom: 4px solid #000; }
  .ar.down { border-left: 4px solid transparent; border-right: 4px solid transparent; border-top: 4px solid #000; }
  .ar.left { border-top: 4px solid transparent; border-bottom: 4px solid transparent; border-right: 4px solid #000; }
  .ar.right { border-top: 4px solid transparent; border-bottom: 4px solid transparent; border-left: 4px solid #000; }
  .vthumb { position: absolute; left: 0; top: 422px; width: 18px; height: 24px; }
  .hthumb { position: absolute; left: 418px; top: 0; width: 9px; height: 17px; }
  .corner { width: 18px; background: #d4d0c8; flex-shrink: 0; }

  .status { height: 21px; box-sizing: border-box; border-top: 1px solid #fff; margin-top: 0; padding-top: 2px; display: flex; background: #d4d0c8; font-size: 11px; color: #222; }
  .panel { height: 17px; box-sizing: border-box; border: 1px solid; border-color: #808080 #fff #fff #808080; line-height: 15px; padding-left: 1px; white-space: nowrap; }
  .panel.grow { width: 953px; }
  .panel.fixed { margin-left: 0; flex: 1; letter-spacing: -0.080px; }

  .taskbar { height: 43px; box-sizing: border-box; border-top: 1px solid #fff; background: #d4d0c8; display: flex; align-items: center; padding: 2px 0 0 2px; }
  .task { height: 38px; display: flex; align-items: center; justify-content: center; flex-shrink: 0; }
  .start { width: 50px; gap: 2px; padding: 0 0 0 1px; }
  .start b { font-size: 12px; color: #000; }
  .handle { width: 2px; height: 34px; flex-shrink: 0; background: #a0a0a0; border-right: 1px solid #fff; border-left: 1px solid #fff; }
  .h1 { margin: 0 8px 0 7px; }
  .t39 { width: 39px; }
  .t45 { width: 45px; }
  .t47 { width: 47px; }
  .stack { width: 5px; height: 38px; flex-shrink: 0; }
  .stack.s2 { width: 3px; }
  .stack.s3 { width: 4px; margin-left: 1px; }
  .ml1 { margin-left: 1px; }
  .ml3 { margin-left: 3px; }
  .ml4 { margin-left: 4px; }
  .slot { display: flex; justify-content: center; align-items: center; height: 38px; flex-shrink: 0; }
  .s53 { width: 53px; }
  .s50 { width: 50px; }
  .active { border: 1px solid; border-color: #404040 #fff #fff #404040; background: repeating-conic-gradient(#ffffff 0 25%, #eceae4 0 50%) 0 0 / 2px 2px; box-sizing: border-box; }
  .right { margin-left: auto; display: flex; align-items: center; }
  .lang { font-size: 12px; margin: 0 2px 0 9px; color: #111; }
  .handle.thin { height: 24px; }
  .tray { width: 140px; height: 38px; box-sizing: border-box; margin-left: 3px; border: 1px solid; border-color: #808080 #fff #fff #808080; display: flex; align-items: center; padding-left: 5px; }
  .chev { margin-right: 8px; }
  .ti { margin-left: 8px; }
  .ti:first-of-type { margin-left: 7px; }
  .taskbar :global(.avast) { font: bold 11px "Liberation Sans", sans-serif; fill: #fff; text-anchor: middle; }
  .taskbar :global(.wp) { font: bold 17px "Liberation Serif", serif; fill: #e07820; text-anchor: middle; }
  .taskbar :global(.od) { font: bold 13.500px "Liberation Sans", sans-serif; fill: #fff; }
  .taskbar :global(.wordw) { font: bold italic 15px "Liberation Serif", serif; fill: #2a68c0; text-anchor: middle; }

  .tooltip { position: absolute; left: 1230px; top: 21px; width: 50px; height: 17px; box-sizing: border-box; background: #ffffe1; border: 1px solid #000; font-size: 11px; line-height: 15px; padding-left: 2px; white-space: nowrap; overflow: hidden; }
</style>
